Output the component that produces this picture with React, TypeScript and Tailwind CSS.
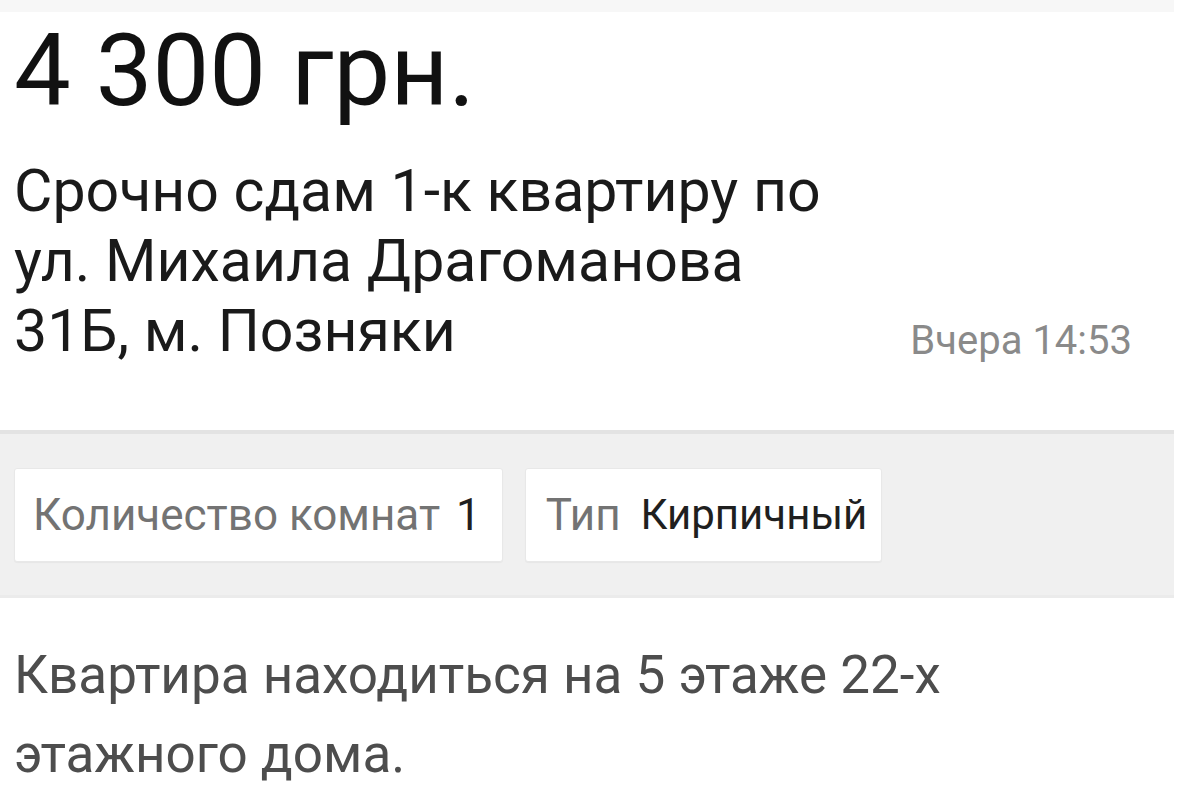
import React, { JSX } from "react";

export default function App(): JSX.Element {
  return (
    <div className="w-full h-[802px] bg-white overflow-hidden font-['Roboto','Noto_Sans',sans-serif]">
      <div className="w-[1174px]">
        <div className="h-[12px] bg-[#f7f7f7]" />

        <div className="pl-[14px] pt-[9px] h-[144px]">
          <h1 className="text-[101px] leading-[100px] text-[#111]">4 300 грн.</h1>
        </div>

        <div className="flex items-end justify-between pl-[14px] pr-[42px] h-[210px]">
          <h2 className="text-[59px] leading-[70px] text-[#1a1a1a] w-[840px]">
            Срочно сдам 1-к квартиру по ул. Михаила Драгоманова 31Б, м. Позняки
          </h2>
          <span className="text-[40px] leading-[70px] mb-[-10px] text-[#8a8a8a] whitespace-nowrap">Вчера 14:53</span>
        </div>

        <div className="mt-[64px] h-[168px] bg-[#f0f0f0] border-t-[4px] border-[#e3e3e3] border-b-[3px] border-b-[#ebebeb] flex items-center gap-[22px] px-[14px]">
          <div className="h-[94px] pl-[18px] pr-[21px] flex items-center gap-[16px] bg-white rounded-[3px] border border-[#e8e8e8] shadow-[0_1px_1px_rgba(0,0,0,0.04)]">
            <span className="text-[44px] text-[#737373]">Количество комнат</span>
            <span className="text-[44px] text-[#1f1f1f]">1</span>
          </div>
          <div className="h-[94px] pl-[20px] pr-[14px] flex items-center gap-[20px] bg-white rounded-[3px] border border-[#e8e8e8] shadow-[0_1px_1px_rgba(0,0,0,0.04)]">
            <span className="text-[44px] text-[#737373]">Тип</span>
            <span className="text-[42px] text-[#1f1f1f]">Кирпичный</span>
          </div>
        </div>

        <p className="pl-[14px] pt-[38px] pr-[200px] text-[53px] leading-[79px] text-[#4d4d4d]">
          Квартира находиться на 5 этаже 22-х этажного дома.
        </p>
      </div>
    </div>
  );
}
